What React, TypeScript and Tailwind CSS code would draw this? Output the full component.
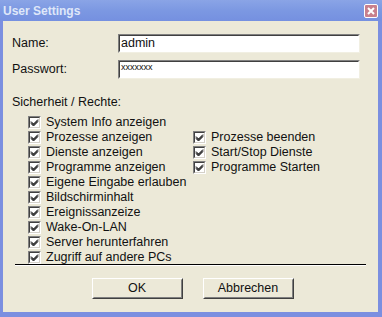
import React from 'react';

const left = [
  'System Info anzeigen',
  'Prozesse anzeigen',
  'Dienste anzeigen',
  'Programme anzeigen',
  'Eigene Eingabe erlauben',
  'Bildschirminhalt',
  'Ereignissanzeize',
  'Wake-On-LAN',
  'Server herunterfahren',
  'Zugriff auf andere PCs',
];

const right = ['Prozesse beenden', 'Start/Stop Dienste', 'Programme Starten'];

function Check({ label }: { label: string }) {
  return (
    <div className="flex items-center h-[15px] gap-[5px]">
      <div className="w-[13px] h-[13px] shrink-0 bg-white border border-t-[#808080] border-l-[#808080] border-r-white border-b-white">
        <div className="w-full h-full border border-t-[#404040] border-l-[#404040] border-r-[#d4d0c8] border-b-[#d4d0c8] flex items-center justify-center">
          <svg width="9" height="9" viewBox="0 0 9 9">
            <path d="M1 3.5 L3.5 6 L8 1.5 M1 4.5 L3.5 7 L8 2.5 M1 5.5 L3.5 8 L8 3.5" stroke="#000" strokeWidth="1" fill="none" />
          </svg>
        </div>
      </div>
      <span className="leading-none">{label}</span>
    </div>
  );
}

function Field({ value, small }: { value: string; small?: boolean }) {
  return (
    <div className="w-[242px] h-[19px] bg-white border border-t-[#808080] border-l-[#808080] border-r-[#f1efe2] border-b-[#f1efe2]">
      <div className="w-full h-full border border-t-[#404040] border-l-[#404040] border-r-white border-b-white flex items-center px-[1px]">
        <span className={small ? 'text-[9px] leading-none -mt-[4px]' : 'leading-none'}>{value}</span>
      </div>
    </div>
  );
}

function Btn({ label }: { label: string }) {
  return (
    <div className="w-[91px] h-[21px] bg-[#ece9d8] border border-t-white border-l-white border-r-[#404040] border-b-[#404040]">
      <div className="w-full h-full border border-t-[#ece9d8] border-l-[#ece9d8] border-r-[#808080] border-b-[#808080] flex items-center justify-center">
        {label}
      </div>
    </div>
  );
}

export default function App() {
  return (
    <div
      className="w-[382px] h-[317px] flex flex-col bg-[#7b8fe0] text-[12.5px] text-[#111]"
      style={{ fontFamily: '"Liberation Sans", Arial, sans-serif' }}
    >
      <div className="h-[21px] shrink-0 flex items-center justify-between pl-[3px] pr-[4px] bg-gradient-to-b from-[#8aa4e6] via-[#7c98e2] to-[#7590e0]">
        <span className="font-bold text-[12px] text-[#dfe7f9]">User Settings</span>
        <div className="w-[14px] h-[14px] rounded-[2px] border border-white bg-[#c8808d] flex items-center justify-center">
          <svg width="8" height="8" viewBox="0 0 8 8">
            <path d="M1 1 L7 7 M7 1 L1 7" stroke="#fff" strokeWidth="2" />
          </svg>
        </div>
      </div>
      <div className="flex-1 ml-[3px] mr-[4px] mb-[5px] bg-[#ece9d8] flex flex-col pt-[13px] pl-[9px]">
        <div className="flex items-center h-[19px]">
          <span className="w-[106px]">Name:</span>
          <Field value="admin" />
        </div>
        <div className="flex items-center h-[19px] mt-[7px]">
          <span className="w-[106px]">Passwort:</span>
          <Field value="xxxxxxx" small />
        </div>
        <div className="mt-[15px] h-[16px] leading-[16px]">Sicherheit / Rechte:</div>
        <div className="flex mt-[5px] pl-[16px]">
          <div className="w-[165px] flex flex-col">
            {left.map((l) => (
              <Check key={l} label={l} />
            ))}
          </div>
          <div className="flex flex-col mt-[15px]">
            {right.map((l) => (
              <Check key={l} label={l} />
            ))}
          </div>
        </div>
        <div className="ml-[3px] mr-[12px] -mt-[1px] h-[2px] border-t border-t-black border-b border-b-white" />
        <div className="flex justify-center gap-[20px] mt-[12px] pr-[5px]">
          <Btn label="OK" />
          <Btn label="Abbrechen" />
        </div>
      </div>
    </div>
  );
}
